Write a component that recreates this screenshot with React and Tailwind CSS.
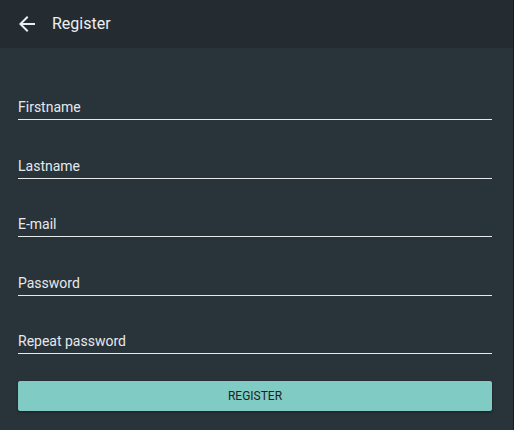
import React from 'react';

const fields = ['Firstname', 'Lastname', 'E-mail', 'Password', 'Repeat password'];

const App = () => {
  return (
    <div className="h-[430px] w-[514px] overflow-hidden bg-[#29333a] font-['Roboto',sans-serif] border-r border-[#161c20]">
      <header className="flex h-12 items-center bg-[#242c32]">
        <div className="ml-[15px] flex h-6 w-6 items-center justify-center">
          <svg width="24" height="24" viewBox="0 0 24 24" fill="#eceff1">
            <path d="M20 11H7.83l5.59-5.59L12 4l-8 8 8 8 1.41-1.41L7.83 13H20v-2z" />
          </svg>
        </div>
        <h1 className="ml-[13px] text-base text-[#eceff1]">Register</h1>
      </header>

      <div className="px-[18px] pr-[21px] pt-[49px]">
        {fields.map((label, index) => (
          <div
            key={label}
            className={`border-b border-[#e6e9eb] pb-[2px] ${index > 0 ? 'mt-[35.5px]' : ''}`}
          >
            <span className="block text-sm leading-5 text-[#e6e9eb]">{label}</span>
          </div>
        ))}

        <button className="mt-[27px] flex h-[30px] w-full items-center justify-center rounded-[2px] bg-[#80cbc4] text-xs text-[#1b1f22] shadow-[0_1px_3px_rgba(0,0,0,0.4)]">
          REGISTER
        </button>
      </div>
    </div>
  );
};

export default App;
